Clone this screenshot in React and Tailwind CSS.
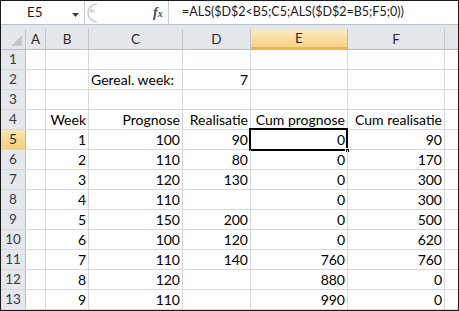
import React from 'react';

const cols = [
    { key: 'A', w: 'w-[20px]' },
    { key: 'B', w: 'w-[43px]' },
    { key: 'C', w: 'w-[94px]' },
    { key: 'D', w: 'w-[68px]' },
    { key: 'E', w: 'w-[97px]' },
    { key: 'F', w: 'w-[97px]' },
];

// cell contents per row: [A, B, C, D, E, F]; "l:" prefix = left aligned text
const rows = [
    ['', '', '', '', '', ''],
    ['', '', 'l:Gereal. week:', '7', '', ''],
    ['', '', '', '', '', ''],
    ['', 'Week', 'Prognose', 'Realisatie', 'Cum prognose', 'Cum realisatie'],
    ['', '1', '100', '90', '0', '90'],
    ['', '2', '110', '80', '0', '170'],
    ['', '3', '120', '130', '0', '300'],
    ['', '4', '110', '', '0', '300'],
    ['', '5', '150', '200', '0', '500'],
    ['', '6', '100', '120', '0', '620'],
    ['', '7', '110', '140', '760', '760'],
    ['', '8', '120', '', '880', '0'],
    ['', '9', '110', '', '990', '0'],
];

function Cell({ value, width, active }) {
    const left = value.startsWith('l:');
    const text = left ? value.slice(2) : value;
    return (
        <div
            className={`relative ${width} h-full shrink-0 border-r border-[#d4d9e1] flex items-end pb-[2px] whitespace-nowrap ${
                left ? 'justify-start pl-[2px]' : 'justify-end pr-[2px]'
            }`}
        >
            <span className="leading-[15px]">{text}</span>
            {active && (
                <>
                    <div className="absolute -left-[2px] -top-[2px] -right-[1px] -bottom-[2px] border-2 border-black pointer-events-none" />
                    <div className="absolute -right-[3px] -bottom-[4px] w-[5px] h-[5px] bg-black border border-white" />
                </>
            )}
        </div>
    );
}

export default function App() {
    return (
        <div className="w-[459px] h-[311px] overflow-hidden border border-[#1a1a1a] bg-white text-[14px] text-black font-['Lato',sans-serif]">
            {/* formula bar */}
            <div className="h-[24px] flex bg-white border-b border-[#b9c1cc]">
                <div className="w-[84px] shrink-0 flex items-center relative border-r border-[#c6ccd4]">
                    <span className="ml-[26px] text-[13.5px] text-[#1a1a1a]">E5</span>
                    <svg className="absolute left-[71px] top-[12px]" width="7" height="4" viewBox="0 0 7 4">
                        <path d="M0 0 H7 L3.5 4 Z" fill="#3c3c3c" />
                    </svg>
                </div>
                <div className="w-[84px] shrink-0 flex items-center relative bg-white border-r border-[#c6ccd4]">
                    <svg className="absolute -left-[2px] top-[2px]" width="18" height="20" viewBox="0 0 18 20">
                        <path d="M14 1 A9 9 0 0 0 14 19" fill="none" stroke="#c9cdd2" strokeWidth="1.5" />
                        <ellipse cx="9" cy="8" rx="3" ry="2" fill="#d7dadd" />
                    </svg>
                    <span className="ml-[68px] font-['Liberation_Serif',serif] italic font-bold text-[14px] text-[#4a4a4a] leading-none">
                        f<span className="text-[10px]">x</span>
                    </span>
                </div>
                <div className="flex-1 flex items-center pl-[13px] text-[12.5px] text-[#1a1a1a] whitespace-nowrap">
                    =ALS($D$2&lt;B5;C5;ALS($D$2=B5;F5;0))
                </div>
            </div>
            <div className="h-[4px] bg-[#e3e6ea]" />

            {/* column headers */}
            <div className="h-[21px] flex bg-[#e4e7eb] border-b border-[#b7bec8] text-[13.5px] text-[#2b2b2b]">
                <div className="w-[25px] shrink-0 h-full border-r border-[#c2c7ce] relative">
                    <svg className="absolute right-[3px] bottom-[3px]" width="11" height="11" viewBox="0 0 11 11">
                        <path d="M11 0 V11 H0 Z" fill="#c4c8ce" />
                    </svg>
                </div>
                {cols.map((c) => (
                    <div
                        key={c.key}
                        className={`${c.w} shrink-0 h-full border-r flex items-center justify-center ${
                            c.key === 'E'
                                ? 'bg-gradient-to-b from-[#fbeac2] to-[#f7d486] border-[#e2b75c] border-b-2 border-b-[#f2b545]'
                                : 'border-[#c2c7ce]'
                        }`}
                    >
                        {c.key}
                    </div>
                ))}
                <div className="flex-1" />
            </div>

            {/* rows */}
            {rows.map((row, r) => {
                const n = r + 1;
                const sel = n === 5;
                return (
                    <div key={n} className="h-[20px] flex border-b border-[#d4d9e1]">
                        <div
                            className={`w-[25px] shrink-0 h-full flex items-center justify-center border-r text-[13.5px] ${
                                sel
                                    ? 'bg-gradient-to-b from-[#fae5b2] to-[#f6cf7a] border-[#e6b348] text-[#2b2b2b]'
                                    : 'bg-[#e4e7eb] border-[#b7bec8] text-[#3b3b3b]'
                            }`}
                        >
                            {n}
                        </div>
                        {cols.map((c, i) => (
                            <Cell key={c.key} value={row[i]} width={c.w} active={sel && c.key === 'E'} />
                        ))}
                        <div className="flex-1" />
                    </div>
                );
            })}
        </div>
    );
}
